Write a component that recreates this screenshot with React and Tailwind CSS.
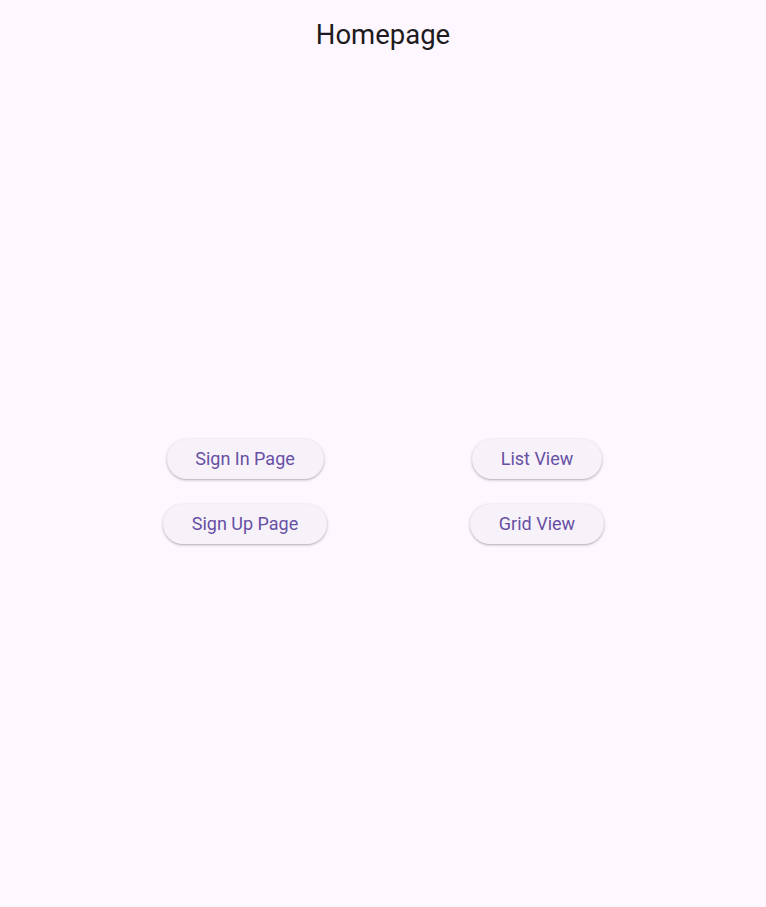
export default function App() {
  const btn =
    "h-[40px] pb-[2px] rounded-full bg-[#f7f2fa] text-[#6750a4] text-[18px] font-normal flex items-center justify-center shadow-[0_1px_2px_rgba(0,0,0,0.22),0_1px_3px_1px_rgba(0,0,0,0.08)]";
  return (
    <div className="w-[766px] h-[907px] bg-[#fef7ff] flex flex-col" style={{ fontFamily: "Roboto, sans-serif" }}>
      <div className="h-[70px] flex items-center justify-center">
        <h1 className="text-[27.5px] text-[#1d1b20] font-normal">Homepage</h1>
      </div>
      <div className="flex justify-center gap-[143px] pt-[369px] pl-[1px]">
        <div className="flex flex-col items-center gap-[25px] w-[164px]">
          <button className={btn + " w-[157px]"}>Sign In Page</button>
          <button className={btn + " w-[164px]"}>Sign Up Page</button>
        </div>
        <div className="flex flex-col items-center gap-[25px] w-[134px]">
          <button className={btn + " w-[130px]"}>List View</button>
          <button className={btn + " w-[134px]"}>Grid View</button>
        </div>
      </div>
    </div>
  );
}
